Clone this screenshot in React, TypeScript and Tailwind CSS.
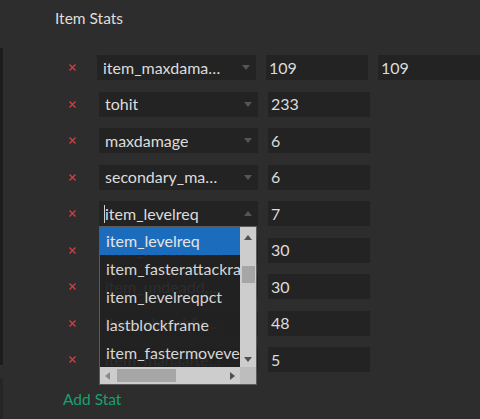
import React from "react";

interface StatRow {
  stat: string;
  values: string[];
  open?: boolean;
}

const rows: StatRow[] = [
  { stat: "item_maxdamage_percent", values: ["109", "109"] },
  { stat: "tohit", values: ["233"] },
  { stat: "maxdamage", values: ["6"] },
  { stat: "secondary_maxdamage", values: ["6"] },
  { stat: "item_levelreq", values: ["7"], open: true },
  { stat: "item_fasterattackrate", values: ["30"] },
  { stat: "item_undeaddamage_percent", values: ["30"] },
  { stat: "item_absorbfire_percent", values: ["48"] },
  { stat: "item_manaafterkill", values: ["5"] },
];

const options = [
  "item_levelreq",
  "item_fasterattackrate",
  "item_levelreqpct",
  "lastblockframe",
  "item_fastermovevelocity",
];

function Triangle({ up, className }: { up?: boolean; className: string }) {
  return (
    <svg width="8" height="5" viewBox="0 0 8 5" className={className}>
      {up ? <path d="M0 5 L4 0 L8 5 Z" fill="currentColor" /> : <path d="M0 0 L8 0 L4 5 Z" fill="currentColor" />}
    </svg>
  );
}

function Dropdown() {
  return (
    <div className="absolute left-0 top-full z-10 w-[158px] h-[159px] border border-[#5b5b5b] bg-[#222222]/95 flex flex-col overflow-hidden">
      <div className="flex flex-1 min-h-0">
        <div className="flex-1 min-w-0 overflow-hidden">
          {options.map((o, i) => (
            <div
              key={o}
              className={
                i === 0
                  ? "h-[28px] flex items-center pl-[6px] whitespace-nowrap bg-[#1c6cbd] text-[#e4e4e4]"
                  : "h-[28px] flex items-center pl-[6px] whitespace-nowrap text-[#d6d6d6]"
              }
            >
              {o}
            </div>
          ))}
        </div>
        {/* vertical scrollbar */}
        <div className="w-[16px] bg-[#cdcdcd] flex flex-col items-center">
          <Triangle up className="text-[#505050] mt-[8px]" />
          <div className="w-[13px] h-[17px] bg-[#a6a6a6] mt-[26px]" />
          <div className="flex-1" />
          <Triangle className="text-[#505050] mb-[5px]" />
        </div>
      </div>
      {/* horizontal scrollbar */}
      <div className="h-[17px] flex">
        <div className="flex-1 bg-[#cdcdcd] flex items-center">
          <svg width="5" height="8" viewBox="0 0 5 8" className="text-[#8a8a8a] ml-[5px]">
            <path d="M5 0 L0 4 L5 8 Z" fill="currentColor" />
          </svg>
          <div className="w-[59px] h-[13px] bg-[#a6a6a6] ml-[7px]" />
          <div className="flex-1" />
          <svg width="5" height="8" viewBox="0 0 5 8" className="text-[#505050] mr-[5px]">
            <path d="M0 0 L5 4 L0 8 Z" fill="currentColor" />
          </svg>
        </div>
        <div className="w-[16px] bg-[#bdbdbd]" />
      </div>
    </div>
  );
}

export default function App() {
  return (
    <div className="w-[480px] h-[419px] bg-[#2d2d2d] flex overflow-hidden font-['Lato','Liberation_Sans',sans-serif] text-[16px]">
      {/* edge of neighbouring panel */}
      <div className="w-[3px] shrink-0 flex flex-col">
        <div className="h-[48px]" />
        <div className="h-[317px] bg-[#1c1c1c]" />
        <div className="h-[13px]" />
        <div className="flex-1 bg-[#262626]" />
      </div>

      <div className="flex-1 min-w-0 pl-[52px] flex flex-col">
        <div className="h-[38px] flex items-center text-[15.5px] text-[#dedede]">Item Stats</div>

        <div className="mt-[17px] flex flex-col gap-[11.5px]">
          {rows.map((r) => (
            <div key={r.stat} className="flex items-center h-[25px]">
              <div className="w-[44px] pl-[14px] flex items-center">
                <svg width="7" height="7" viewBox="0 0 7 7" className="text-[#d23f3f]">
                  <path d="M0.5 0.5 L6.5 6.5 M6.5 0.5 L0.5 6.5" stroke="currentColor" strokeWidth="1.3" />
                </svg>
              </div>
              <div className="relative w-[159px] h-[25px] shrink-0 bg-[#232323] flex items-center pl-[6px] pr-[35px] text-[#dcdcdc]">
                {r.open && <span className="w-px h-[18px] bg-[#cfcfcf] -ml-[1px]" />}
                <span className="truncate">{r.stat}</span>
                <Triangle up={r.open} className="absolute right-[6px] top-[10px] text-[#555555]" />
                {r.open && <Dropdown />}
              </div>
              {r.values.map((v, i) => (
                <div
                  key={i}
                  className="ml-[10px] w-[102px] h-[25px] shrink-0 bg-[#232323] flex items-center pl-[3px] text-[#dcdcdc]"
                >
                  {v}
                </div>
              ))}
            </div>
          ))}
        </div>

        <div className="mt-[16px] pl-[8px] text-[15.5px] text-[#18a070]">Add Stat</div>
      </div>
    </div>
  );
}
